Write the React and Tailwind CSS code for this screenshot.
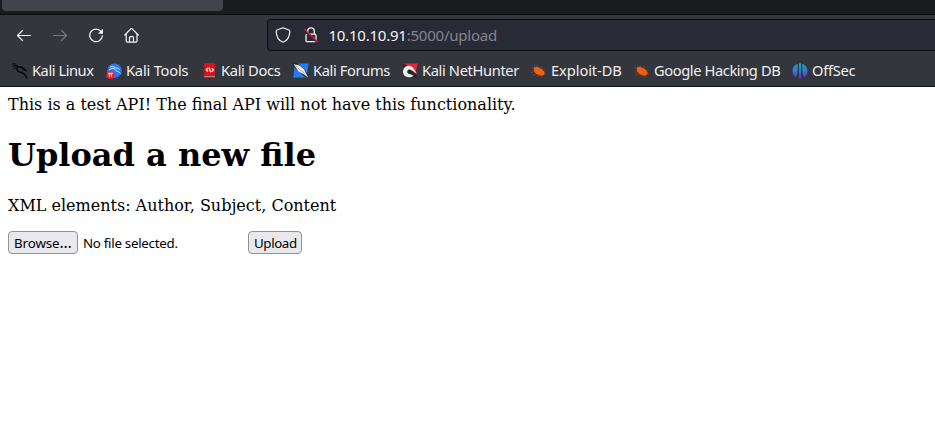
import React from 'react';

const Dragon = ({ color = '#08090b' }) => (
  <svg width="16" height="16" viewBox="0 0 16 16" fill="none" stroke={color}>
    <path d="M.2 1.100C2 .2 4.300.8 5.500 2.800M.2 3.500C2.500 2.500 4.500 2.800 6 4M1.500 1.800l4 1.500M1.500 6 4 4.500" strokeWidth="1" />
    <path d="M5.700 3.600C4 5.800 4.800 8.300 7.800 8.900C11 9.400 13.500 10.500 15 15.500M5.500 4C8 3.500 10.500 4.500 11.800 6L14.500 7.800" strokeWidth="1.500" />
    <path d="M10 5 12.200 5.300l2.500 2.500-3.500-.8z" fill={color} strokeWidth=".5" />
  </svg>
);

const Tools = () => (
  <svg width="16" height="16" viewBox="0 0 16 16" fill="none">
    <circle cx="8.500" cy="7.700" r="7.200" fill="#2878f5" />
    <path d="M4 4C7 3 9 4 10 5.500M3 7C6 5 8 5 9 6.500c.5 2 4 1.500 5.500 4M9.500 5c2-.4 3.300.500 4 2" stroke="#d5e7ff" strokeWidth="1" />
    <rect x=".4" y="8" width="8" height="7.800" rx="3" fill="#e32630" />
    <path d="M2 10.300h5M3.400 10.300v3.500M5.500 10.300v3.500" stroke="#fff" strokeWidth=".9" />
  </svg>
);

const Docs = () => (
  <svg width="16" height="16" viewBox="0 0 16 16" fill="none">
    <path d="M3 0h11v13.500H3z" fill="#df1017" />
    <path d="M2.300 0h1.200v14H2.300z" fill="#a80c18" />
    <path d="M3 13.500h11v1H3z" fill="#e4dfe1" />
    <path d="M2.300 14.300H14v1H2.300z" fill="#85111a" />
    <path d="M7 5 5.200 6.700 7 8.500M10.700 5.300l1.900 1.700-1.900 1.700M8 4.500l1.700 4.800" stroke="#fff" strokeWidth="1.200" />
  </svg>
);

const Forums = () => (
  <svg width="16" height="16" viewBox="0 0 16 16" fill="none">
    <path d="M2 .5h13.700L13.300 14.500H.3z" fill="#247df5" />
    <path d="M.5 0h4l10.500 11 .5 4-3-.5L2 5z" fill="#282c33" />
    <path d="M.8 1.200 6 2.300l5 4.200 4.300 8.200-4.500-3.400-5-2.500L3.200 5z" fill="#eee" />
    <path d="m2.500 2 4 4.500 5 3.500" stroke="#777b82" strokeWidth=".6" />
  </svg>
);

const NetHunter = () => (
  <svg width="16" height="16" viewBox="0 0 16 16" fill="none">
    <path d="M2.500.5h13.200L12.500 14 7 11 .5 5z" fill="#ed2732" />
    <path d="m1 1 4 1 9 10 1.500 3.500-8.500-3L1 6z" fill="#25272d" />
    <path d="M3 4C6.500 1.800 9.500 3 11.500 5.500l3.500 5.200-4.500-3C8 5.800 5.800 6 5.300 8c-.5 2 1 3.300 3.200 3.200l3 1.500C8 15.300 3.500 14.300 1.700 11.500.4 9 .8 6 3 4z" fill="#f1eded" />
  </svg>
);

const Exploit = () => (
  <svg width="16" height="16" viewBox="0 0 16 16" fill="none" stroke="#a24522" strokeWidth=".7">
    <path d="m5 5-1.500-3M7 4.500 6 2M10 5.500 10.500 3M12.500 8l2-.5M12.800 10.500l2.500.5M4 8.500.500 9.500M5 11l-3 1M8 12l-1 1.700M11 12.500v2M3.500 6 .7 4.500" />
    <path d="M2.800 4.500 6 3.800l5 2.300 2.700 3.500-.7 2.500-3 .6-4.800-1.600L3 8z" fill="#f05f12" stroke="none" />
  </svg>
);

const OffSec = () => (
  <svg width="16" height="16" viewBox="0 0 16 16">
    <defs>
      <linearGradient id="offsec" x1="0" y1="0" x2="0" y2="1">
        <stop stopColor="#16a5b6" />
        <stop offset=".5" stopColor="#327bcb" />
        <stop offset="1" stopColor="#6426cc" />
      </linearGradient>
    </defs>
    <path d="M5.700.8C2.500 2 .5 4.700.5 8c0 2.600 1.300 5 3.300 6.300 1.400-2 1.900-5 1.900-7zM10.300.8c3.200 1.200 5.200 3.900 5.200 7.200 0 2.600-1.300 5-3.300 6.300-1.400-2-1.900-5-1.900-7zM7 .3h2v15.400H7z" fill="url(#offsec)" />
  </svg>
);

const bookmarks = [
  { label: 'Kali Linux', Icon: Dragon, width: 'w-[94px]', text: 'tracking-[-0.45px]' },
  { label: 'Kali Tools', Icon: Tools, width: 'w-[95px]', text: 'tracking-[-0.2px]' },
  { label: 'Kali Docs', Icon: Docs, width: 'w-[92px]', text: 'tracking-[-0.32px]' },
  { label: 'Kali Forums', Icon: Forums, width: 'w-[109px]', text: 'tracking-[-0.36px]' },
  { label: 'Kali NetHunter', Icon: NetHunter, width: 'w-[129px]', text: 'tracking-[-0.36px]' },
  { label: 'Exploit-DB', Icon: Exploit, width: 'w-[103px]', text: 'tracking-[-0.08px]' },
  { label: 'Google Hacking DB', Icon: Exploit, width: 'w-[158px]', text: 'tracking-[-0.4px]' },
  { label: 'OffSec', Icon: OffSec, width: 'w-[70px]', text: 'tracking-[-0.28px]' },
];

function TabStrip() {
  return (
    <div className="h-[15px] shrink-0 overflow-hidden border-b border-[#0c0d10] bg-[#1a1b1f] pl-0.5">
      <div className="h-[11px] w-[221px] rounded-b bg-[#42444b]" />
    </div>
  );
}

function Toolbar() {
  return (
    <div className="flex h-10 shrink-0 items-center pl-4">
      <div className="flex w-[251px] items-center gap-5 text-[#f5f5f6]">
        <svg width="16" height="16" viewBox="0 0 16 16" fill="none" stroke="currentColor" strokeWidth="1.200" strokeLinecap="round" strokeLinejoin="round">
          <path d="M14.500 8.500H1.500M6.500 3.500l-5 5 5 5" />
        </svg>
        <svg className="text-[#777980]" width="16" height="16" viewBox="0 0 16 16" fill="none" stroke="currentColor" strokeWidth="1.200" strokeLinecap="round" strokeLinejoin="round">
          <path d="M1.500 8.500h13M9.500 3.500l5 5-5 5" />
        </svg>
        <svg width="16" height="16" viewBox="0 0 16 16" fill="none" stroke="currentColor" strokeWidth="1.300" strokeLinecap="round">
          <path d="M13 4.500A6.300 6.300 0 1 0 14.300 9" />
          <path d="M15 1.700V6.800H10z" fill="currentColor" stroke="none" />
        </svg>
        <svg width="16" height="16" viewBox="0 0 16 16" fill="none" stroke="currentColor" strokeWidth="1.200" strokeLinecap="round" strokeLinejoin="round">
          <path d="M.8 8 6.800 1.800q.7-.6 1.400 0L14.300 8M2.200 7v7q0 1.200 1.200 1.200h8.400q1.200 0 1.200-1.200V7M5.500 15v-4.500q0-.9.9-.9h2.200q.9 0 .9.900V15" />
        </svg>
      </div>
      <div className="flex h-8 flex-1 items-center rounded-l border border-r-0 border-[#0c0d13] bg-[#282a36] pl-[7px] text-[#f4f4f5]">
        <svg width="16" height="16" viewBox="0 0 16 16" fill="none" stroke="currentColor" strokeWidth="1.200" strokeLinejoin="round">
          <path d="M8 .8 14 3q.8.300.8 1.200C14.700 9.500 12.500 13.500 8 15.300 3.500 13.500 1.300 9.500 1.200 4.200Q1.200 3.300 2 3z" />
        </svg>
        <svg className="ml-3" width="16" height="16" viewBox="0 0 16 16" fill="none" stroke="currentColor" strokeWidth="1.300">
          <rect x="3" y="7.200" width="10" height="7.500" rx="1.200" />
          <path d="M4.700 7V4.200a3.300 3.300 0 0 1 6.600 0V7" />
          <path d="m1.200 3.300 13.600 12.400" stroke="#282a36" strokeWidth="2" />
          <path d="m1.200 2 13.600 13" stroke="#d91949" strokeWidth="1.300" />
        </svg>
        <div className="ml-[9px] whitespace-nowrap pl-[0.4px] text-[15px] leading-5 tracking-[-0.22px]">
          10.10.10.91<span className="text-[#85868f]">:5000/upload</span>
        </div>
      </div>
    </div>
  );
}

function Bookmarks() {
  return (
    <div className="flex h-8 shrink-0 items-center border-b border-[#101114] pl-3 pt-px">
      {bookmarks.map(({ label, Icon, width, text }) => (
        <div key={label} className={`flex shrink-0 items-center gap-1 ${width}`}>
          <Icon />
          <span className={`whitespace-nowrap pb-0.5 text-[14.67px] leading-5 text-[#f0f0f1] ${text}`}>{label}</span>
        </div>
      ))}
    </div>
  );
}

export default function App() {
  return (
    <div className="flex h-[445px] w-[935px] flex-col overflow-hidden bg-white font-['Noto_Sans',sans-serif]">
      <div className="flex flex-col bg-[#34363e]">
        <TabStrip />
        <Toolbar />
        <Bookmarks />
      </div>
      <main className="p-2 font-['DejaVu_Serif',serif] text-base leading-[19px] text-black">
        <p>This is a test API! The final API will not have this functionality.</p>
        <h1 className="mt-[23px] text-[32px] font-bold leading-[37px]">Upload a new file</h1>
        <p className="mt-[22px]">XML elements: Author, Subject, Content</p>
        <form className="mt-4 flex items-center font-['Noto_Sans',sans-serif] text-[13.33px]" onSubmit={(event) => event.preventDefault()}>
          <button type="button" className="h-[23px] w-[70px] whitespace-nowrap rounded border border-[#8f8f9d] bg-[#e9e9ed] pl-[5px] text-left leading-5 tracking-[-0.1px]">Browse<span className="text-[15.5px] leading-none">…</span></button>
          <span className="ml-[5px] w-[165px] whitespace-nowrap leading-5 tracking-[-0.28px]">No file selected.</span>
          <button type="submit" className="h-[23px] w-[54px] whitespace-nowrap rounded border border-[#8f8f9d] bg-[#e9e9ed] pl-[5px] text-left leading-5 tracking-[-0.4px]">Upload</button>
        </form>
      </main>
    </div>
  );
}
